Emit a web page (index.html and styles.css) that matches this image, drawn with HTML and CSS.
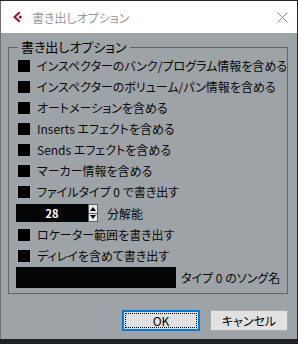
FILE: index.html
```html
<!DOCTYPE html>
<html lang="ja">
<head>
    <meta charset="UTF-8">
    <title>書き出しオプション</title>
    <link rel="stylesheet" href="styles.css">
</head>
<body>
    <div class="window">
        <div class="titlebar">
            <svg class="app-icon" width="12" height="12" viewBox="0 0 12 12">
                <path d="M7 0.5 L1 6 L7 11.5 L8.5 10 L4 6 L8.5 2 Z" fill="#a3132e"/>
                <circle cx="8.3" cy="6" r="1.6" fill="#a3132e"/>
            </svg>
            <span class="title">書き出しオプション</span>
            <svg class="close" width="11" height="11" viewBox="0 0 11 11">
                <path d="M0.5 0.5 L10.5 10.5 M10.5 0.5 L0.5 10.5" stroke="#8c8c8c" stroke-width="1"/>
            </svg>
        </div>
        <div class="content">
            <fieldset class="group">
                <legend>書き出しオプション</legend>
                <div class="row"><span class="check"></span>インスペクターのバンク/プログラム情報を含める</div>
                <div class="row"><span class="check"></span>インスペクターのボリューム/パン情報を含める</div>
                <div class="row"><span class="check"></span>オートメーションを含める</div>
                <div class="row"><span class="check"></span>Inserts エフェクトを含める</div>
                <div class="row"><span class="check"></span>Sends エフェクトを含める</div>
                <div class="row"><span class="check"></span>マーカー情報を含める</div>
                <div class="row"><span class="check"></span>ファイルタイプ 0 で書き出す</div>
                <div class="row spin-row">
                    <div class="spin">
                        <span class="spin-value">28</span>
                        <span class="spin-buttons">
                            <span class="spin-btn"><span class="arrow-up"></span></span>
                            <span class="spin-btn"><span class="arrow-down"></span></span>
                        </span>
                    </div>
                    分解能
                </div>
                <div class="row"><span class="check"></span>ロケーター範囲を書き出す</div>
                <div class="row"><span class="check"></span>ディレイを含めて書き出す</div>
                <div class="row name-row"><span class="name-field"></span>タイプ 0 のソング名</div>
            </fieldset>
            <div class="buttons">
                <button class="btn btn-default"><span class="focus">OK</span></button>
                <button class="btn">キャンセル</button>
            </div>
        </div>
    </div>
</body>
</html>
```

FILE: styles.css
```css
body {
    margin: 0;
    background: #1f2124;
    font-family: "Noto Sans CJK JP", sans-serif;
    font-feature-settings: "palt";
    font-size: 12px;
    color: #0a0a0a;
}

.window {
    margin-top: 1px;
    width: 296px;
    height: 338px;
    border-left: 1px solid #6c7074;
    background: #9ea3a7;
    display: flex;
    flex-direction: column;
}

.titlebar {
    height: 32px;
    background: #fff;
    display: flex;
    align-items: center;
    padding: 0 0 0 11px;
}

.app-icon {
    flex-shrink: 0;
}

.title {
    margin-left: 8px;
    color: #999;
    font-size: 12px;
    flex: 1;
}

.close {
    margin-right: 9px;
}

.content {
    flex: 1;
    display: flex;
    flex-direction: column;
}

.group {
    margin: 6px 0 0 7px;
    width: 276px;
    box-sizing: border-box;
    border: 1px solid #62676b;
    padding: 0 0 5px 9px;
}

.group legend {
    margin-left: 0;
    padding: 0 3px;
    font-size: 13px;
    line-height: 16px;
    color: #000;
}

.row {
    height: 21px;
    display: flex;
    align-items: center;
    white-space: nowrap;
}

.check {
    width: 12px;
    height: 12px;
    background: #000;
    margin-right: 7px;
    flex-shrink: 0;
}

.spin-row {
    height: 22px;
}

.spin {
    margin-left: -2px;
    margin-right: 9px;
    display: flex;
    height: 18px;
}

.spin-value {
    width: 72px;
    background: #050505;
    color: #fff;
    font-weight: bold;
    font-size: 11px;
    display: flex;
    align-items: center;
    justify-content: center;
}

.spin-buttons {
    width: 10px;
    display: flex;
    flex-direction: column;
    border: 1px solid #5a5e62;
    box-sizing: border-box;
}

.spin-btn {
    flex: 1;
    background: #e9e9e9;
    display: flex;
    align-items: center;
    justify-content: center;
}

.spin-btn + .spin-btn {
    border-top: 1px solid #5a5e62;
}

.arrow-up {
    border-left: 3px solid transparent;
    border-right: 3px solid transparent;
    border-bottom: 4px solid #000;
}

.arrow-down {
    border-left: 3px solid transparent;
    border-right: 3px solid transparent;
    border-top: 4px solid #000;
}

.name-row {
    height: 21px;
    margin-top: 1px;
}

.name-field {
    margin-left: -2px;
    width: 160px;
    height: 21px;
    background: #050505;
    margin-right: 5px;
}

.buttons {
    display: flex;
    justify-content: flex-end;
    gap: 10px;
    padding-right: 9px;
    margin-top: 16px;
}

.btn {
    width: 78px;
    height: 21px;
    background: #e1e1e1;
    border: 1px solid #adadad;
    font-family: "Noto Sans CJK JP", sans-serif;
    font-feature-settings: "palt";
    font-size: 12px;
    color: #000;
    padding: 0;
}

.btn-default {
    border: 2px solid #0078d7;
    padding: 1px;
}

.focus {
    display: flex;
    align-items: center;
    justify-content: center;
    height: 100%;
    border: 1px dotted #000;
    box-sizing: border-box;
}
```
